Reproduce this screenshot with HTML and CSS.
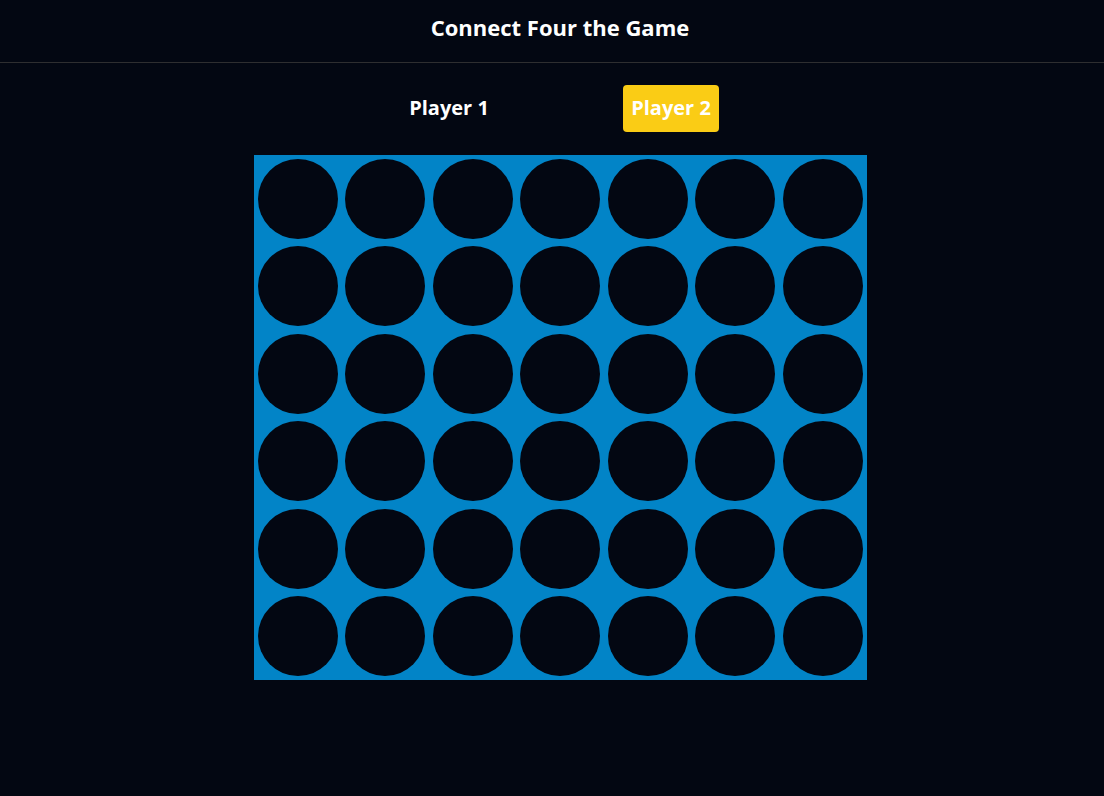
FILE: index.html
```html
<!DOCTYPE html>
<html>
<head>
<meta charset="utf-8">
<link rel="stylesheet" href="styles.css">
</head>
<body>
<header class="header"><h1 class="title">Connect Four the Game</h1></header>
<main class="main">
  <div class="players">
    <div class="player">Player 1</div>
    <div class="player player-active">Player 2</div>
  </div>
  <div class="board">
    <div class="cell"></div><div class="cell"></div><div class="cell"></div><div class="cell"></div><div class="cell"></div><div class="cell"></div><div class="cell"></div>
    <div class="cell"></div><div class="cell"></div><div class="cell"></div><div class="cell"></div><div class="cell"></div><div class="cell"></div><div class="cell"></div>
    <div class="cell"></div><div class="cell"></div><div class="cell"></div><div class="cell"></div><div class="cell"></div><div class="cell"></div><div class="cell"></div>
    <div class="cell"></div><div class="cell"></div><div class="cell"></div><div class="cell"></div><div class="cell"></div><div class="cell"></div><div class="cell"></div>
    <div class="cell"></div><div class="cell"></div><div class="cell"></div><div class="cell"></div><div class="cell"></div><div class="cell"></div><div class="cell"></div>
    <div class="cell"></div><div class="cell"></div><div class="cell"></div><div class="cell"></div><div class="cell"></div><div class="cell"></div><div class="cell"></div>
  </div>
</main>
</body>
</html>
```
FILE: styles.css
```css
html, body {
  margin: 0;
  padding: 0;
  background: #030712;
  color: #ffffff;
  font-family: "Open Sans", "Noto Sans", sans-serif;
  height: 100%;
}
.header {
  box-sizing: border-box;
  height: 63px;
  border-bottom: 1px solid #2e2e30;
  display: flex;
  justify-content: center;
  padding-left: 16px;
  padding-top: 12px;
}
.title {
  margin: 0;
  font-size: 22px;
  line-height: 30px;
  font-weight: 700;
}
.main {
  display: flex;
  flex-direction: column;
  align-items: center;
  padding-left: 16px;
  padding-top: 22px;
}
.players {
  display: flex;
  gap: 126px;
  margin-bottom: 23px;
}
.player {
  box-sizing: border-box;
  height: 47px;
  width: 96px;
  padding-bottom: 2px;
  display: flex;
  align-items: center;
  justify-content: center;
  font-size: 20px;
  font-weight: 700;
  border-radius: 4px;
}
.player-active {
  background: #facc15;
}
.board {
  background: #0284c7;
  padding: 4px;
  display: grid;
  grid-template-columns: repeat(7, 80px);
  grid-auto-rows: 80px;
  gap: 7.4px 7.5px;
}
.cell {
  background: #030712;
  border-radius: 50%;
}
```
